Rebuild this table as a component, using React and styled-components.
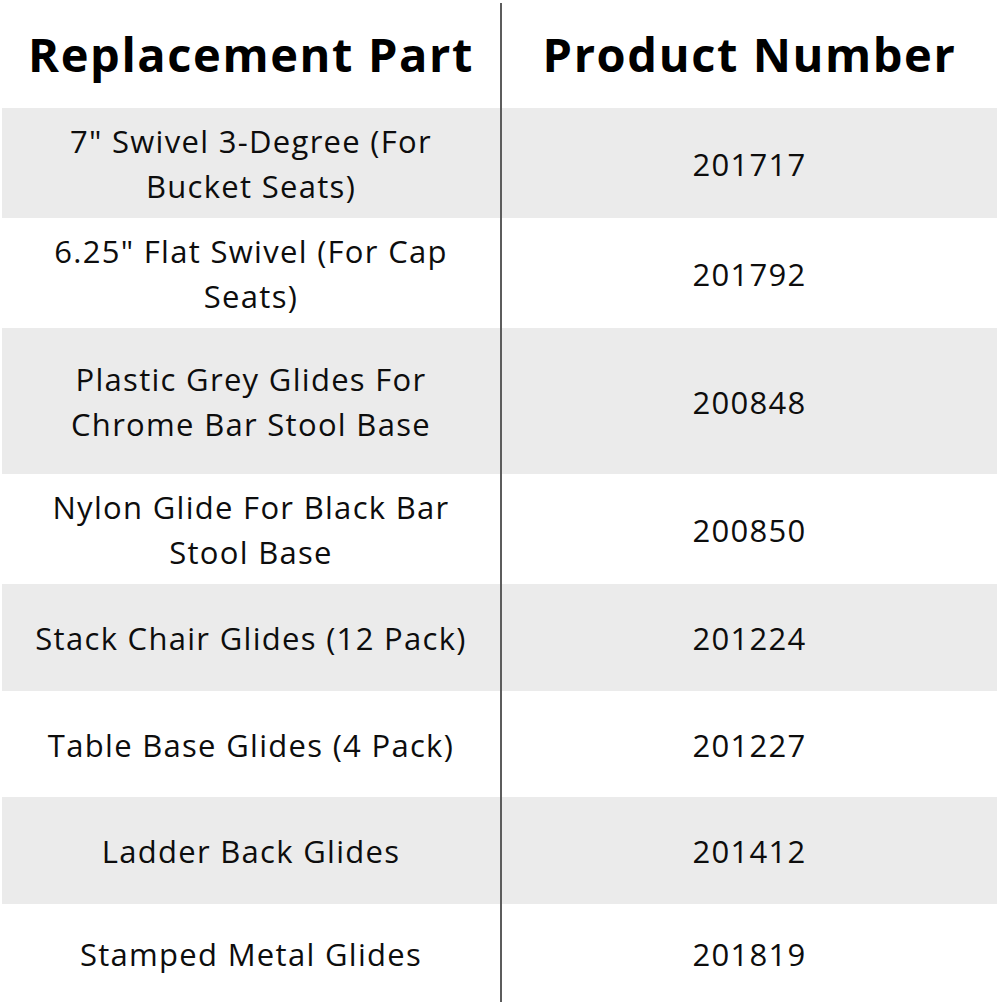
import React from "react";
import styled, { createGlobalStyle } from "styled-components";

const Global = createGlobalStyle`
  html, body { margin: 0; padding: 0; background: #ffffff; }
  body { font-family: "Open Sans", "Liberation Sans", sans-serif; color: #000; }
`;

const Table = styled.div`
  width: 1000px;
  height: 1002px;
  box-sizing: border-box;
  padding: 0 3px 0 2px;
  display: flex;
  flex-direction: column;
  overflow: hidden;
`;

const HeaderRow = styled.div`
  display: grid;
  grid-template-columns: 500px 495px;
  height: 108px;
  box-sizing: border-box;
  padding-top: 3px;
`;

const HeadCell = styled.div`
  display: flex;
  align-items: center;
  justify-content: center;
  font-size: 47px;
  font-weight: 700;
  letter-spacing: 1.6px;
  color: #000;
  padding-bottom: 3px;
  box-sizing: border-box;
  white-space: nowrap;
  border-right: ${(p) => (p.$divider ? "2px solid #5c5c5c" : "none")};
`;

const Row = styled.div`
  display: grid;
  grid-template-columns: 500px 495px;
  height: ${(p) => p.$h}px;
  background: ${(p) => (p.$shaded ? "#ebebeb" : "#ffffff")};
`;

const Cell = styled.div`
  display: flex;
  align-items: center;
  justify-content: center;
  text-align: center;
  font-size: 31px;
  line-height: 45px;
  letter-spacing: 1.3px;
  color: #0d0d0d;
  padding: 2px 10px 0;
  box-sizing: border-box;
  white-space: nowrap;
  border-right: ${(p) => (p.$divider ? "2px solid #5c5c5c" : "none")};
`;

const rows = [
  { part: ["7\" Swivel 3-Degree (For", "Bucket Seats)"], num: "201717", h: 110 },
  { part: ["6.25\" Flat Swivel (For Cap", "Seats)"], num: "201792", h: 110 },
  { part: ["Plastic Grey Glides For", "Chrome Bar Stool Base"], num: "200848", h: 146 },
  { part: ["Nylon Glide For Black Bar", "Stool Base"], num: "200850", h: 110 },
  { part: ["Stack Chair Glides (12 Pack)"], num: "201224", h: 107 },
  { part: ["Table Base Glides (4 Pack)"], num: "201227", h: 106 },
  { part: ["Ladder Back Glides"], num: "201412", h: 107 },
  { part: ["Stamped Metal Glides"], num: "201819", h: 98 },
];

export default function App() {
  return (
    <>
      <Global />
      <Table>
        <HeaderRow>
          <HeadCell $divider>Replacement Part</HeadCell>
          <HeadCell>Product Number</HeadCell>
        </HeaderRow>
        {rows.map((r, i) => (
          <Row key={r.num} $h={r.h} $shaded={i % 2 === 0}>
            <Cell $divider>
              <span>
                {r.part.map((l, j) => (
                  <React.Fragment key={j}>
                    {j > 0 && <br />}
                    {l}
                  </React.Fragment>
                ))}
              </span>
            </Cell>
            <Cell>{r.num}</Cell>
          </Row>
        ))}
      </Table>
    </>
  );
}
